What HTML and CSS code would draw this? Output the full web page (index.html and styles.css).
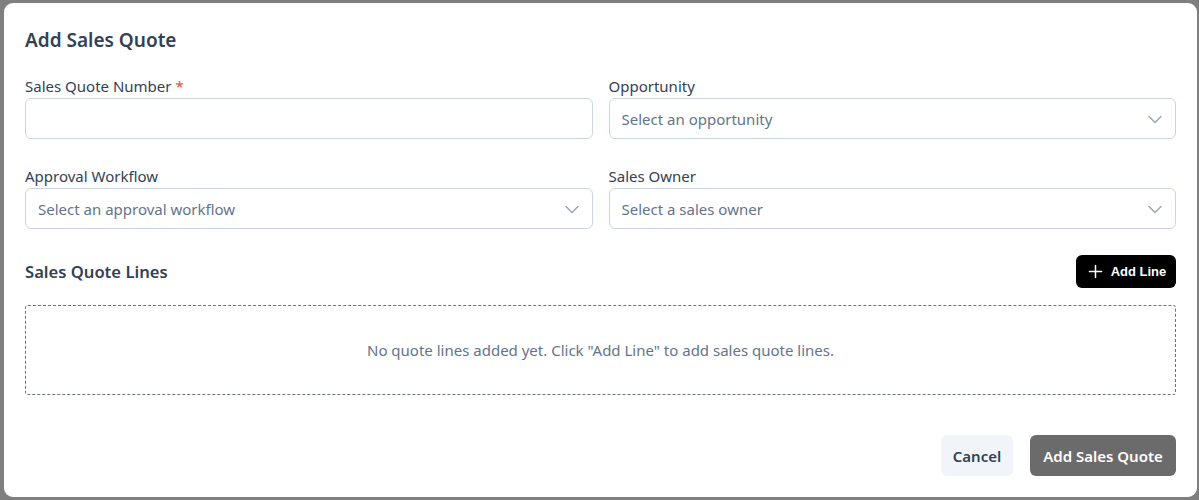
FILE: index.html
```html
<!DOCTYPE html>
<html lang="en">
<head>
<meta charset="utf-8">
<title>Add Sales Quote</title>
<link rel="stylesheet" href="styles.css">
</head>
<body>
<div class="backdrop">
  <div class="modal">
    <h2 class="title">Add Sales Quote</h2>
    <div class="form-grid">
      <div class="field">
        <label class="label">Sales Quote Number <span class="req">*</span></label>
        <div class="input"></div>
      </div>
      <div class="field">
        <label class="label">Opportunity</label>
        <div class="input select"><span class="placeholder">Select an opportunity</span><svg class="chev" viewBox="0 0 16 16" width="16" height="16"><path d="M2 5.5 8 11.5 14 5.5" fill="none" stroke="currentColor" stroke-width="1.4" stroke-linecap="round" stroke-linejoin="round"/></svg></div>
      </div>
      <div class="field">
        <label class="label">Approval Workflow</label>
        <div class="input select"><span class="placeholder">Select an approval workflow</span><svg class="chev" viewBox="0 0 16 16" width="16" height="16"><path d="M2 5.5 8 11.5 14 5.5" fill="none" stroke="currentColor" stroke-width="1.4" stroke-linecap="round" stroke-linejoin="round"/></svg></div>
      </div>
      <div class="field">
        <label class="label">Sales Owner</label>
        <div class="input select"><span class="placeholder">Select a sales owner</span><svg class="chev" viewBox="0 0 16 16" width="16" height="16"><path d="M2 5.5 8 11.5 14 5.5" fill="none" stroke="currentColor" stroke-width="1.4" stroke-linecap="round" stroke-linejoin="round"/></svg></div>
      </div>
    </div>
    <div class="lines-head">
      <h3 class="subtitle">Sales Quote Lines</h3>
      <button class="btn-add"><svg viewBox="0 0 16 16" width="15" height="15"><path d="M8 1.5v13M1.5 8h13" stroke="currentColor" stroke-width="1.6" stroke-linecap="round"/></svg><span>Add Line</span></button>
    </div>
    <div class="empty">No quote lines added yet. Click "Add Line" to add sales quote lines.</div>
    <div class="footer">
      <button class="btn-cancel">Cancel</button>
      <button class="btn-primary">Add Sales Quote</button>
    </div>
  </div>
</div>
</body>
</html>
```

FILE: styles.css
```css
* { box-sizing: border-box; }
html, body { margin: 0; padding: 0; }
body {
  background: #7f7f7f;
  font-family: "Noto Sans", "Open Sans", sans-serif;
  width: 1199px;
  height: 500px;
  overflow: hidden;
}
.backdrop {
  padding: 3px 2px 0 4px;
}
.modal {
  width: 1193px;
  height: 494px;
  background: #ffffff;
  border-radius: 9px;
  padding: 23px 21px 21px 21px;
  display: flex;
  flex-direction: column;
}
.title {
  margin: 0;
  font-size: 19px;
  line-height: 28px;
  font-weight: 600;
  color: #334155;
}
.form-grid {
  margin-top: 22px;
  display: grid;
  grid-template-columns: 1fr 1fr;
  column-gap: 16px;
  row-gap: 27px;
}
.field { display: flex; flex-direction: column; }
.label {
  font-size: 15px;
  line-height: 20px;
  color: #334155;
  margin-bottom: 2px;
}
.req { color: #ef4444; }
.input {
  height: 41px;
  border: 1px solid #cbd5e1;
  border-radius: 6px;
  background: #fff;
}
.select {
  display: flex;
  align-items: center;
  justify-content: space-between;
  padding: 0 12px 0 12px;
}
.placeholder {
  font-size: 15px;
  color: #64748b;
}
.chev { color: #94a3b8; }
.lines-head {
  margin-top: 26px;
  display: flex;
  align-items: center;
  justify-content: space-between;
}
.subtitle {
  margin: 0;
  font-size: 16.6px;
  line-height: 24px;
  font-weight: 600;
  color: #334155;
}
.btn-add {
  height: 33px;
  width: 100px;
  border: none;
  border-radius: 6px;
  background: #000;
  color: #fff;
  display: flex;
  align-items: center;
  justify-content: center;
  gap: 8px;
  font-family: "Liberation Sans", Arial, sans-serif;
  font-weight: 700;
  font-size: 13px;
  padding: 0 0 0 2px;
}
.empty {
  margin-top: 17px;
  height: 90px;
  border: 1px dashed #6b7280;
  border-radius: 3px;
  display: flex;
  align-items: center;
  justify-content: center;
  font-size: 15px;
  color: #64748b;
}
.footer {
  margin-top: auto;
  display: flex;
  justify-content: flex-end;
  gap: 17px;
}
.btn-cancel, .btn-primary {
  height: 41px;
  border: none;
  border-radius: 6px;
  font-family: "Noto Sans", "Open Sans", sans-serif;
  font-size: 15px;
  font-weight: 600;
}
.btn-cancel {
  width: 72px;
  background: #f1f5f9;
  color: #334155;
}
.btn-primary {
  width: 146px;
  background: #6b6b6b;
  color: #fff;
}
```
